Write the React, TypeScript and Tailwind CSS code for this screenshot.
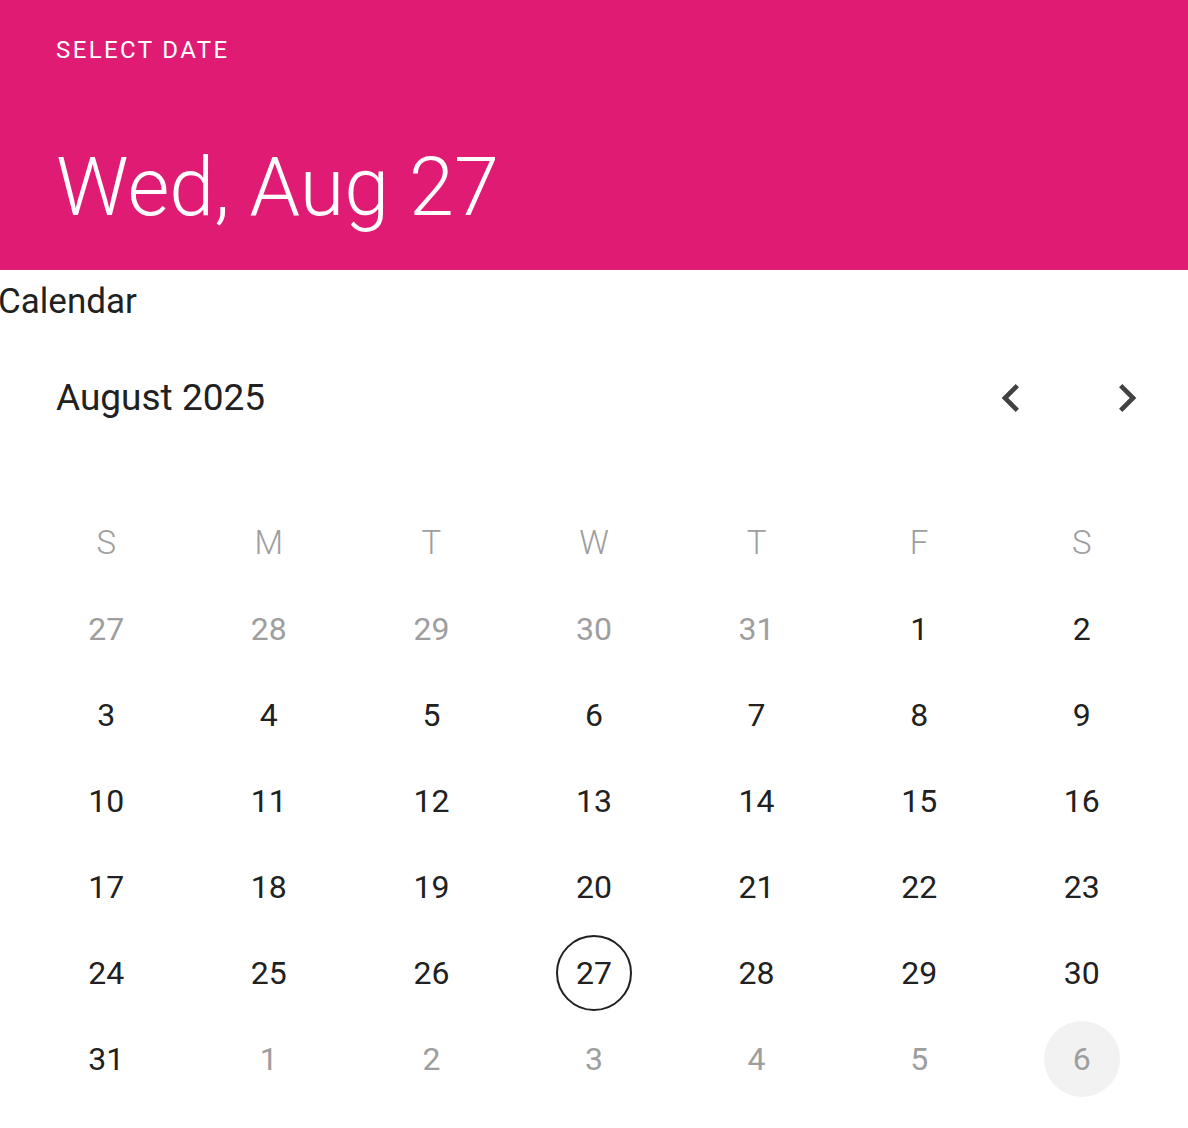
import { ReactNode } from "react";

type Day = {
  label: number;
  muted: boolean;
  selected?: boolean;
  hovered?: boolean;
};

const WEEKDAYS = ["S", "M", "T", "W", "T", "F", "S"];

// August 2025 starts on a Friday, so the first row borrows five days from July.
function buildWeeks(): Day[][] {
  const days: Day[] = [];
  for (const d of [27, 28, 29, 30, 31]) days.push({ label: d, muted: true });
  for (let d = 1; d <= 31; d++) days.push({ label: d, muted: false, selected: d === 27 });
  for (let d = 1; d <= 6; d++) days.push({ label: d, muted: true, hovered: d === 6 });

  const weeks: Day[][] = [];
  for (let i = 0; i < days.length; i += 7) weeks.push(days.slice(i, i + 7));
  return weeks;
}

function Chevron({ dir }: { dir: "left" | "right" }) {
  return (
    <svg viewBox="0 0 24 24" className="h-14 w-14" fill="#424242">
      {dir === "left" ? (
        <path d="M15.41 7.41L14 6l-6 6 6 6 1.41-1.41L10.83 12z" />
      ) : (
        <path d="M10 6L8.59 7.41 13.17 12l-4.58 4.59L10 18l6-6z" />
      )}
    </svg>
  );
}

function Cell({ children }: { children: ReactNode }) {
  return <div className="flex h-[86px] items-center justify-center">{children}</div>;
}

export default function App() {
  const weeks = buildWeeks();

  return (
    <div
      className="w-[1188px] bg-white text-[#212121]"
      style={{ fontFamily: "Roboto, 'Noto Sans', sans-serif" }}
    >
      <header className="flex h-[270px] flex-col bg-[#e01b74] pl-[56px] text-white">
        <div className="mt-[36px] text-[24px] leading-[28px] tracking-[0.1em]">SELECT DATE</div>
        <div className="mt-[76px] text-[81px] leading-[96px] font-light">Wed, Aug 27</div>
      </header>

      <div className="-ml-[2px] h-[86px] pt-[8px] text-[35px] leading-[48px]">Calendar</div>

      <div className="flex h-[84px] items-center justify-between pl-[56px] pr-[33px]">
        <div className="text-[37px]">August 2025</div>
        <div className="flex gap-[60px]">
          <button type="button">
            <Chevron dir="left" />
          </button>
          <button type="button">
            <Chevron dir="right" />
          </button>
        </div>
      </div>

      <div className="h-[60px]" />

      <div className="px-[25px] pb-[26px]">
        <div className="grid grid-cols-7 text-[33px] font-light text-[#9e9e9e]">
          {WEEKDAYS.map((w, i) => (
            <Cell key={i}>{w}</Cell>
          ))}
        </div>
        {weeks.map((week, wi) => (
          <div key={wi} className="grid grid-cols-7 text-[32px]">
            {week.map((day, di) => (
              <Cell key={di}>
                <div
                  className={
                    "flex h-[76px] w-[76px] items-center justify-center rounded-full " +
                    (day.selected ? "border-2 border-[#212121] " : "") +
                    (day.hovered ? "bg-[#f2f2f2] " : "") +
                    (day.muted ? "text-[#9e9e9e]" : "text-[#212121]")
                  }
                >
                  {day.label}
                </div>
              </Cell>
            ))}
          </div>
        ))}
      </div>
    </div>
  );
}
